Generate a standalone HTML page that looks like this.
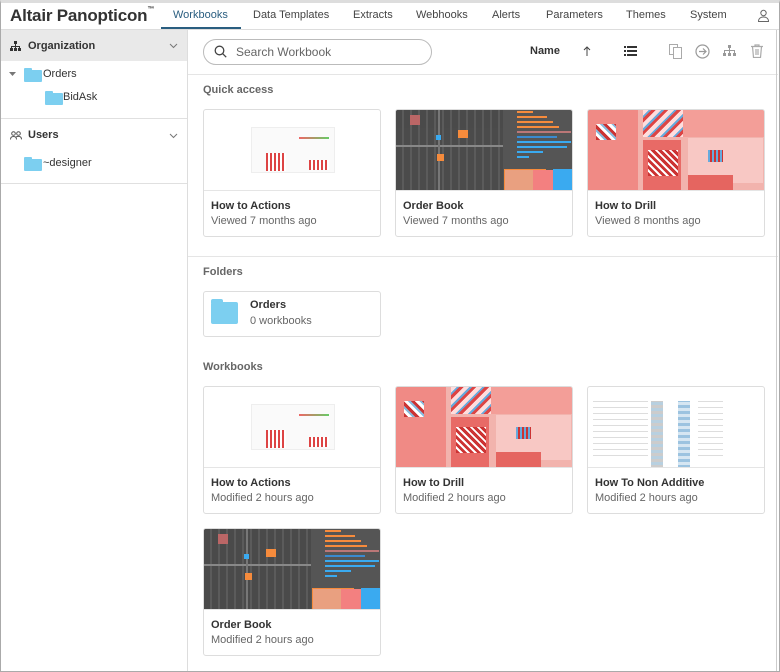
<!DOCTYPE html>
<html><head><style>
*{box-sizing:border-box;margin:0;padding:0}
body{width:780px;height:672px;overflow:hidden;background:#fff;font-family:"Liberation Sans",sans-serif;color:#333;position:relative;font-size:11px}
.a{position:absolute}
.border{position:absolute;left:0;top:0;width:780px;height:672px;border:1px solid #aaa;border-top:3px solid #ddd;pointer-events:none}
.tab{position:absolute;top:9px;font-size:11px;color:#444}
.card{position:absolute;width:178px;height:128px;border:1px solid #ddd;border-radius:3px;background:#fff;overflow:hidden}
.card .th{position:absolute;left:0;top:0;width:176px;height:81px;border-bottom:1px solid #e5e5e5;overflow:hidden}
.card .t{position:absolute;left:7px;top:90px;font-weight:bold;font-size:11px;color:#333}
.card .s{position:absolute;left:7px;top:105px;font-size:11px;color:#666}
.lbl{position:absolute;left:203px;font-size:11px;font-weight:bold;color:#666}
.fold{position:absolute;width:18px;height:12px;background:#7ccff0;border-radius:1px}
.fold:before{content:"";position:absolute;left:0;top:-2px;width:8px;height:3px;background:#7ccff0;border-radius:1px 1px 0 0}
.ob{background:#555}
.dr{background:#f2b3ad}
</style></head><body>
<div class="a" style="left:10px;top:6px;font-size:17px;font-weight:bold;color:#333;letter-spacing:-0.2px">Altair Panopticon<span style="font-size:7px;vertical-align:top">™</span></div>
<div class="tab" style="left:173px;color:#2a5e80">Workbooks</div>
<div class="a" style="left:161px;top:27px;width:80px;height:2px;background:#2a5e80"></div>
<div class="tab" style="left:253px">Data Templates</div>
<div class="tab" style="left:353px">Extracts</div>
<div class="tab" style="left:416px">Webhooks</div>
<div class="tab" style="left:492px">Alerts</div>
<div class="tab" style="left:546px">Parameters</div>
<div class="tab" style="left:626px">Themes</div>
<div class="tab" style="left:690px">System</div>
<svg class="a" style="left:757px;top:9px" width="13" height="13" viewBox="0 0 13 13" fill="none" stroke="#666" stroke-width="1"><circle cx="6.5" cy="4" r="2.7"/><path d="M1.5 12.5c0-3 2.2-4.5 5-4.5s5 1.5 5 4.5z"/></svg>
<div class="a" style="left:0;top:29px;width:780px;height:1px;background:#ddd"></div>
<div class="a" style="left:187px;top:30px;width:1px;height:642px;background:#ddd"></div>
<div class="a" style="left:0;top:30px;width:187px;height:31px;background:#e9e9e9"></div>
<svg class="a" style="left:10px;top:41px" width="11" height="10" viewBox="0 0 11 10" fill="#333"><rect x="4" y="0" width="3" height="3"/><rect x="0" y="7" width="3" height="3"/><rect x="4" y="7" width="3" height="3"/><rect x="8" y="7" width="3" height="3"/><path d="M5 3h1v2h4v2h-1v-1h-3v1h-1v-1h-3v1h-1v-2h4z"/></svg>
<div class="a" style="left:28px;top:40px;font-weight:bold;font-size:11px;color:#333">Organization</div>
<svg class="a" style="left:169px;top:43px" width="9" height="6"><path d="M1 1l3.5 3.5L8 1" fill="none" stroke="#777"/></svg>
<svg class="a" style="left:9px;top:72px" width="7" height="5"><path d="M0 0h7L3.5 4z" fill="#777"/></svg>
<div class="fold" style="left:24px;top:70px"></div>
<div class="a" style="left:43px;top:68px">Orders</div>
<div class="fold" style="left:45px;top:93px"></div>
<div class="a" style="left:63px;top:91px">BidAsk</div>
<div class="a" style="left:0;top:118px;width:187px;height:1px;background:#e0e0e0"></div>
<svg class="a" style="left:10px;top:131px" width="12" height="9" viewBox="0 0 12 9" fill="none" stroke="#555"><circle cx="3.5" cy="2.5" r="1.8"/><circle cx="8.5" cy="2.5" r="1.8"/><path d="M0.5 8.5c0-2 1.3-3 3-3s3 1 3 3M6 6c.6-.4 1.5-.6 2.5-.6 1.7 0 3 1 3 3"/></svg>
<div class="a" style="left:28px;top:129px;font-weight:bold">Users</div>
<svg class="a" style="left:169px;top:133px" width="9" height="6"><path d="M1 1l3.5 3.5L8 1" fill="none" stroke="#777"/></svg>
<div class="fold" style="left:24px;top:159px"></div>
<div class="a" style="left:43px;top:157px">~designer</div>
<div class="a" style="left:0;top:183px;width:187px;height:1px;background:#e0e0e0"></div>
<div class="a" style="left:203px;top:39px;width:229px;height:26px;border:1px solid #bbb;border-radius:13px"></div>
<svg class="a" style="left:214px;top:45px" width="13" height="13" fill="none" stroke="#444" stroke-width="1.3"><circle cx="5.5" cy="5.5" r="4.3"/><path d="M8.6 8.6l3.6 3.6"/></svg>
<div class="a" style="left:236px;top:45px;font-size:12px;color:#666">Search Workbook</div>
<div class="a" style="left:530px;top:45px;font-weight:bold;color:#333">Name</div>
<svg class="a" style="left:583px;top:46px" width="8" height="10"><path d="M4 10V1M1 4l3-3 3 3" fill="none" stroke="#444"/></svg>
<svg class="a" style="left:624px;top:46px" width="13" height="10" fill="#333"><rect x="0" y="0" width="2" height="2"/><rect x="3" y="0" width="10" height="2"/><rect x="0" y="4" width="2" height="2"/><rect x="3" y="4" width="10" height="2"/><rect x="0" y="8" width="2" height="2"/><rect x="3" y="8" width="10" height="2"/></svg>
<svg class="a" style="left:669px;top:44px" width="13" height="15" fill="none" stroke="#aaa"><rect x="0.5" y="0.5" width="8" height="10"/><rect x="4.5" y="3.5" width="8" height="11" fill="#fff"/></svg>
<svg class="a" style="left:695px;top:44px" width="15" height="15" fill="none" stroke="#999" stroke-width="1.2"><circle cx="7.5" cy="7.5" r="6.5"/><path d="M4 7.5h7M8 4.5l3 3-3 3"/></svg>
<svg class="a" style="left:723px;top:45px" width="13" height="12" fill="#999"><rect x="5" y="0" width="3" height="3"/><rect x="0" y="8" width="3" height="3"/><rect x="5" y="8" width="3" height="3"/><rect x="10" y="8" width="3" height="3"/><path d="M6 3h1v2h5v3h-1v-2h-4v2h-1v-2h-4v2h-1v-3h5z"/></svg>
<svg class="a" style="left:751px;top:44px" width="12" height="14" fill="none" stroke="#aaa" stroke-width="1.2"><path d="M0 2.5h12M4 2.5V1h4v1.5M1.5 2.5l1 11h7l1-11M5 5v6M7 5v6"/></svg>
<div class="a" style="left:188px;top:74px;width:590px;height:1px;background:#e5e5e5"></div>
<div class="lbl" style="top:84px">Quick access</div>
<div class="card" style="left:203px;top:109px"><div class="th"><div class="a" style="left:47px;top:17px;width:84px;height:46px;background:#fafafa;border:1px solid #eee"></div><div class="a" style="left:62px;top:43px;width:20px;height:18px;background:repeating-linear-gradient(90deg,#d44 0 2px,#fff 2px 4px)"></div><div class="a" style="left:105px;top:50px;width:20px;height:10px;background:repeating-linear-gradient(90deg,#d44 0 2px,#fff 2px 4px)"></div><div class="a" style="left:95px;top:27px;width:30px;height:2px;background:linear-gradient(90deg,#e66,#6c6)"></div></div><div class="t">How to Actions</div><div class="s">Viewed 7 months ago</div></div>
<div class="card" style="left:395px;top:109px"><div class="th ob"><div class="a" style="left:0;top:0;width:107px;height:81px;background:repeating-linear-gradient(90deg,#4a4a4a 0 6px,#5c5c5c 6px 8px),#555;opacity:.9"></div><div class="a" style="left:0;top:35px;width:107px;height:2px;background:#888"></div><div class="a" style="left:42px;top:0;width:2px;height:81px;background:#777"></div><div class="a" style="left:62px;top:20px;width:10px;height:8px;background:#f68b3c"></div><div class="a" style="left:41px;top:44px;width:7px;height:7px;background:#f68b3c"></div><div class="a" style="left:40px;top:25px;width:5px;height:5px;background:#3aaaf0"></div><div class="a" style="left:14px;top:5px;width:10px;height:10px;background:#b66"></div><div class="a" style="left:121px;top:1px;width:16px;height:2px;background:#f68b3c"></div><div class="a" style="left:121px;top:6px;width:30px;height:2px;background:#f68b3c"></div><div class="a" style="left:121px;top:11px;width:36px;height:2px;background:#f68b3c"></div><div class="a" style="left:121px;top:16px;width:42px;height:2px;background:#f68b3c"></div><div class="a" style="left:121px;top:21px;width:54px;height:2px;background:#b77"></div><div class="a" style="left:121px;top:26px;width:40px;height:2px;background:#3a8ad0"></div><div class="a" style="left:121px;top:31px;width:54px;height:2px;background:#3aaaf0"></div><div class="a" style="left:121px;top:36px;width:50px;height:2px;background:#3aaaf0"></div><div class="a" style="left:121px;top:41px;width:26px;height:2px;background:#3aaaf0"></div><div class="a" style="left:121px;top:46px;width:12px;height:2px;background:#3aaaf0"></div><div class="a" style="left:108px;top:59px;width:42px;height:22px;background:#e9a080;border:1px solid #f68b3c"></div><div class="a" style="left:137px;top:60px;width:20px;height:21px;background:#f38080"></div><div class="a" style="left:157px;top:59px;width:19px;height:22px;background:#3aaaf0"></div></div><div class="t">Order Book</div><div class="s">Viewed 7 months ago</div></div>
<div class="card" style="left:587px;top:109px"><div class="th dr"><div class="a" style="left:0;top:0;width:50px;height:81px;background:#f08a85"></div><div class="a" style="left:8px;top:14px;width:20px;height:16px;background:repeating-linear-gradient(45deg,#c33 0 3px,#fff 3px 6px,#8bd 6px 8px)"></div><div class="a" style="left:55px;top:0;width:40px;height:27px;background:repeating-linear-gradient(135deg,#fdd 0 4px,#6ad 4px 6px,#d44 6px 9px)"></div><div class="a" style="left:55px;top:30px;width:38px;height:51px;background:#e86a66"></div><div class="a" style="left:60px;top:40px;width:30px;height:26px;background:repeating-linear-gradient(45deg,#c33 0 3px,#fff 3px 5px)"></div><div class="a" style="left:95px;top:0;width:81px;height:27px;background:#f39e98"></div><div class="a" style="left:100px;top:28px;width:75px;height:45px;background:#f8c8c4"></div><div class="a" style="left:100px;top:65px;width:45px;height:16px;background:#e56560"></div><div class="a" style="left:120px;top:40px;width:15px;height:12px;background:repeating-linear-gradient(90deg,#6ad 0 2px,#c33 2px 4px)"></div></div><div class="t">How to Drill</div><div class="s">Viewed 8 months ago</div></div>
<div class="a" style="left:188px;top:256px;width:590px;height:1px;background:#e5e5e5"></div>
<div class="lbl" style="top:266px">Folders</div>
<div class="a" style="left:203px;top:291px;width:178px;height:46px;border:1px solid #ddd;border-radius:3px"></div>
<div class="a" style="left:211px;top:302px;width:27px;height:22px;background:#7ccff0;border-radius:2px"></div>
<div class="a" style="left:211px;top:299px;width:12px;height:4px;background:#7ccff0;border-radius:2px 2px 0 0"></div>
<div class="a" style="left:250px;top:299px;font-weight:bold">Orders</div>
<div class="a" style="left:250px;top:315px;color:#666">0 workbooks</div>
<div class="lbl" style="top:361px">Workbooks</div>
<div class="card" style="left:203px;top:386px"><div class="th"><div class="a" style="left:47px;top:17px;width:84px;height:46px;background:#fafafa;border:1px solid #eee"></div><div class="a" style="left:62px;top:43px;width:20px;height:18px;background:repeating-linear-gradient(90deg,#d44 0 2px,#fff 2px 4px)"></div><div class="a" style="left:105px;top:50px;width:20px;height:10px;background:repeating-linear-gradient(90deg,#d44 0 2px,#fff 2px 4px)"></div><div class="a" style="left:95px;top:27px;width:30px;height:2px;background:linear-gradient(90deg,#e66,#6c6)"></div></div><div class="t">How to Actions</div><div class="s">Modified 2 hours ago</div></div>
<div class="card" style="left:395px;top:386px"><div class="th dr"><div class="a" style="left:0;top:0;width:50px;height:81px;background:#f08a85"></div><div class="a" style="left:8px;top:14px;width:20px;height:16px;background:repeating-linear-gradient(45deg,#c33 0 3px,#fff 3px 6px,#8bd 6px 8px)"></div><div class="a" style="left:55px;top:0;width:40px;height:27px;background:repeating-linear-gradient(135deg,#fdd 0 4px,#6ad 4px 6px,#d44 6px 9px)"></div><div class="a" style="left:55px;top:30px;width:38px;height:51px;background:#e86a66"></div><div class="a" style="left:60px;top:40px;width:30px;height:26px;background:repeating-linear-gradient(45deg,#c33 0 3px,#fff 3px 5px)"></div><div class="a" style="left:95px;top:0;width:81px;height:27px;background:#f39e98"></div><div class="a" style="left:100px;top:28px;width:75px;height:45px;background:#f8c8c4"></div><div class="a" style="left:100px;top:65px;width:45px;height:16px;background:#e56560"></div><div class="a" style="left:120px;top:40px;width:15px;height:12px;background:repeating-linear-gradient(90deg,#6ad 0 2px,#c33 2px 4px)"></div></div><div class="t">How to Drill</div><div class="s">Modified 2 hours ago</div></div>
<div class="card" style="left:587px;top:386px"><div class="th"><div class="a" style="left:5px;top:14px;width:55px;height:60px;background:repeating-linear-gradient(0deg,#fff 0 5px,#ddd 5px 6px)"></div><div class="a" style="left:63px;top:14px;width:12px;height:67px;background:repeating-linear-gradient(0deg,#ccc 0 3px,#b8d0e0 3px 6px)"></div><div class="a" style="left:90px;top:14px;width:12px;height:67px;background:repeating-linear-gradient(0deg,#9cc3e0 0 3px,#d6e6f2 3px 6px)"></div><div class="a" style="left:110px;top:14px;width:25px;height:60px;background:repeating-linear-gradient(0deg,#fff 0 5px,#ddd 5px 6px)"></div></div><div class="t">How To Non Additive</div><div class="s">Modified 2 hours ago</div></div>
<div class="card" style="left:203px;top:528px"><div class="th ob"><div class="a" style="left:0;top:0;width:107px;height:81px;background:repeating-linear-gradient(90deg,#4a4a4a 0 6px,#5c5c5c 6px 8px),#555;opacity:.9"></div><div class="a" style="left:0;top:35px;width:107px;height:2px;background:#888"></div><div class="a" style="left:42px;top:0;width:2px;height:81px;background:#777"></div><div class="a" style="left:62px;top:20px;width:10px;height:8px;background:#f68b3c"></div><div class="a" style="left:41px;top:44px;width:7px;height:7px;background:#f68b3c"></div><div class="a" style="left:40px;top:25px;width:5px;height:5px;background:#3aaaf0"></div><div class="a" style="left:14px;top:5px;width:10px;height:10px;background:#b66"></div><div class="a" style="left:121px;top:1px;width:16px;height:2px;background:#f68b3c"></div><div class="a" style="left:121px;top:6px;width:30px;height:2px;background:#f68b3c"></div><div class="a" style="left:121px;top:11px;width:36px;height:2px;background:#f68b3c"></div><div class="a" style="left:121px;top:16px;width:42px;height:2px;background:#f68b3c"></div><div class="a" style="left:121px;top:21px;width:54px;height:2px;background:#b77"></div><div class="a" style="left:121px;top:26px;width:40px;height:2px;background:#3a8ad0"></div><div class="a" style="left:121px;top:31px;width:54px;height:2px;background:#3aaaf0"></div><div class="a" style="left:121px;top:36px;width:50px;height:2px;background:#3aaaf0"></div><div class="a" style="left:121px;top:41px;width:26px;height:2px;background:#3aaaf0"></div><div class="a" style="left:121px;top:46px;width:12px;height:2px;background:#3aaaf0"></div><div class="a" style="left:108px;top:59px;width:42px;height:22px;background:#e9a080;border:1px solid #f68b3c"></div><div class="a" style="left:137px;top:60px;width:20px;height:21px;background:#f38080"></div><div class="a" style="left:157px;top:59px;width:19px;height:22px;background:#3aaaf0"></div></div><div class="t">Order Book</div><div class="s">Modified 2 hours ago</div></div>
<div class="a" style="left:776px;top:30px;width:1px;height:642px;background:#ccc"></div>
<div class="border"></div>
</body></html>
